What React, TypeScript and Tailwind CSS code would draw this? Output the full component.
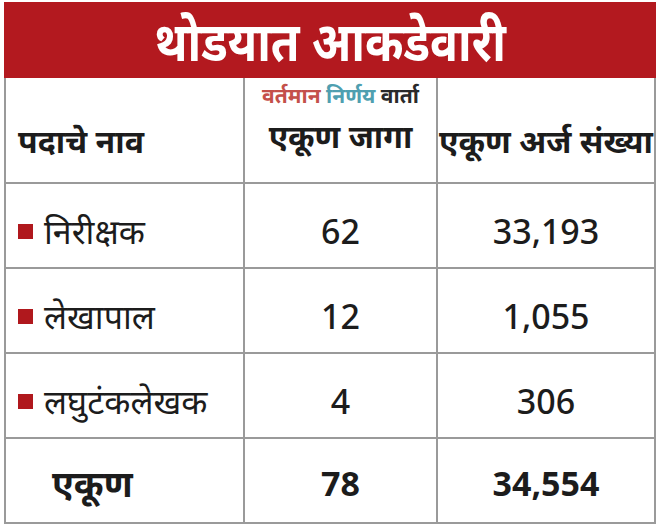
import React from "react";

const font = { fontFamily: "'Noto Sans', 'Noto Sans Devanagari', 'Lohit Devanagari', sans-serif" };

const rows = [
  { name: "निरीक्षक", seats: "62", apps: "33,193" },
  { name: "लेखापाल", seats: "12", apps: "1,055" },
  { name: "लघुटंकलेखक", seats: "4", apps: "306" },
];

export default function App() {
  return (
    <div className="w-[664px] h-[530px] bg-white pt-[2px] pl-[4px]" style={font}>
      <div className="w-[652px]">
        <div className="h-[76px] bg-[#b3191f] flex items-center justify-center text-white leading-none">
          <span className="text-[54px] font-bold scale-x-[0.86] whitespace-nowrap">थोडयात आकडेवारी</span>
        </div>
        <div className="grid grid-cols-[239px_193px_1fr] border-2 border-t-0 border-[#9a9a9a] text-[#1c1c1c]">
          <div className="h-[106px] border-r-2 border-b-2 border-[#9a9a9a] flex items-center pl-[12px] pt-[22px] text-[32px] font-bold">
            पदाचे नाव
          </div>
          <div className="h-[106px] border-r-2 border-b-2 border-[#9a9a9a] flex flex-col items-center">
            <div className="mt-[7px] text-[21px] font-bold leading-none whitespace-nowrap">
              <span className="text-[#c4504a]">वर्तमान</span>{" "}
              <span className="text-[#4f9fb0]">निर्णय</span>{" "}
              <span className="text-[#2a2a2a]">वार्ता</span>
            </div>
            <div className="mt-[14px] text-[32px] font-bold leading-none">एकूण जागा</div>
          </div>
          <div className="h-[106px] border-b-2 border-[#9a9a9a] flex items-center justify-center pt-[22px] text-[32px] font-bold">
            एकूण अर्ज संख्या
          </div>
          {rows.map((r) => (
            <React.Fragment key={r.name}>
              <div className="h-[85px] border-r-2 border-b-2 border-[#9a9a9a] flex items-center pl-[12px] pt-[12px] gap-[11px] text-[34px]">
                <span className="w-[15px] h-[15px] bg-[#b0181d] shrink-0" />
                {r.name}
              </div>
              <div className="h-[85px] border-r-2 border-b-2 border-[#9a9a9a] flex items-center justify-center pt-[12px] text-[34px] font-medium">
                {r.seats}
              </div>
              <div className="h-[85px] border-b-2 border-[#9a9a9a] flex items-center justify-center pt-[12px] text-[34px] font-medium">
                {r.apps}
              </div>
            </React.Fragment>
          ))}
          <div className="h-[83px] border-r-2 border-[#9a9a9a] flex items-center pl-[46px] pt-[6px] text-[36px] font-bold">
            एकूण
          </div>
          <div className="h-[83px] border-r-2 border-[#9a9a9a] flex items-center justify-center pt-[6px] text-[34px] font-bold">
            78
          </div>
          <div className="h-[83px] flex items-center justify-center pt-[6px] text-[34px] font-bold">34,554</div>
        </div>
      </div>
    </div>
  );
}
